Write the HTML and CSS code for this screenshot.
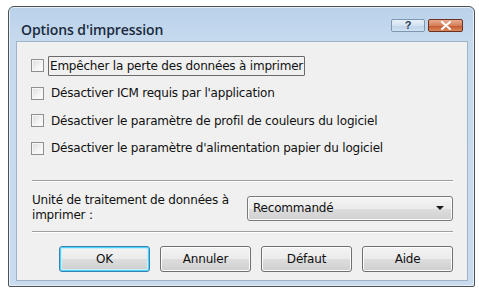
FILE: index.html
```html
<!DOCTYPE html>
<html lang="fr">
<head>
<meta charset="utf-8">
<title>Options d'impression</title>
<link rel="stylesheet" href="styles.css">
</head>
<body>
<div class="window">
  <div class="titlebar">
    <div class="title">Options d'impression</div>
    <div class="caption-buttons">
      <div class="cap-btn help">?</div>
      <div class="cap-btn close">
        <svg width="12" height="9" viewBox="0 0 12 9"><path d="M2 1 L10 8 M10 1 L2 8" stroke="#fff" stroke-width="2.2" stroke-linecap="round"/></svg>
      </div>
    </div>
  </div>
  <div class="client">
    <div class="checks">
      <label class="check-row"><span class="box"></span><span class="lbl focus">Empêcher la perte des données à imprimer</span></label>
      <label class="check-row"><span class="box"></span><span class="lbl">Désactiver ICM requis par l'application</span></label>
      <label class="check-row"><span class="box"></span><span class="lbl">Désactiver le paramètre de profil de couleurs du logiciel</span></label>
      <label class="check-row"><span class="box"></span><span class="lbl">Désactiver le paramètre d'alimentation papier du logiciel</span></label>
    </div>
    <div class="sep sep1"></div>
    <div class="unit-row">
      <div class="unit-label">Unité de traitement de données à<br>imprimer :</div>
      <div class="combo"><span>Recommandé</span><span class="arrow"></span></div>
    </div>
    <div class="sep sep2"></div>
    <div class="buttons">
      <div class="btn default">OK</div>
      <div class="btn">Annuler</div>
      <div class="btn">Défaut</div>
      <div class="btn">Aide</div>
    </div>
  </div>
</div>
</body>
</html>
```
FILE: styles.css
```css
html, body {
  margin: 0;
  padding: 0;
  background: #ffffff;
}
body {
  padding: 6px 4px 0 8px;
  font-family: "DejaVu Sans", Verdana, sans-serif;
  color: #111111;
}
.window {
  width: 465px;
  height: 279px;
  border: 1px solid #4d5257;
  border-radius: 6px 6px 2px 2px;
  background: linear-gradient(to bottom, #b9d1ea 0px, #c6daee 34px, #c9dcef 100%);
  display: flex;
  flex-direction: column;
  box-shadow: inset 0 0 0 1px #e3eef9;
}
.titlebar {
  height: 34px;
  display: flex;
  justify-content: space-between;
  align-items: flex-start;
  padding: 0 11px 0 12px;
}
.title {
  margin-top: 13px;
  font-family: "Open Sans", "Liberation Sans", sans-serif;
  font-weight: 600;
  font-size: 14px;
  color: #1a2a3c;
  letter-spacing: -0.1px;
}
.caption-buttons {
  margin-top: 12px;
  display: flex;
  gap: 3px;
}
.cap-btn {
  height: 11px;
  border: 1px solid #7d97b1;
  border-radius: 2px;
  display: flex;
  align-items: center;
  justify-content: center;
}
.help {
  width: 32px;
  background: linear-gradient(to bottom, #e8f1fa 0%, #d3e2f1 50%, #bfd4ea 51%, #cfe0f1 100%);
  font-family: "Liberation Sans", sans-serif;
  font-weight: bold;
  font-size: 11px;
  color: #2a3f56;
  line-height: 11px;
}
.close {
  width: 33px;
  border-color: #6b3020;
  background: linear-gradient(to bottom, #e9ab90 0%, #d5805a 50%, #c4542c 51%, #da8a5e 100%);
}
.client {
  margin: 0 6px 5px 7px;
  flex: 1;
  background: #f0f0f0;
  border: 1px solid #9fb3c8;
  font-size: 12px;
}
.checks {
  padding: 10px 0 0 14px;
  display: flex;
  flex-direction: column;
}
.check-row {
  height: 27.5px;
  display: flex;
  align-items: center;
}
.box {
  width: 11px;
  height: 11px;
  border: 1px solid #8f8f8f;
  background: linear-gradient(135deg, #dcdcdc 0%, #f4f4f4 60%, #ffffff 100%);
  box-shadow: inset 0 0 0 1px #f6f6f6;
  flex: none;
}
.lbl {
  margin-left: 5px;
  padding: 2px 1px;
  font-size: 12px;
  letter-spacing: -0.2px;
  border: 1px solid transparent;
}
.lbl.focus {
  border: 1px solid #6a6a6a;
  border-radius: 1px;
  margin-left: 4px;
}
.sep {
  height: 0;
  border-top: 1px solid #a0a0a0;
  border-bottom: 1px solid #ffffff;
  margin: 0 14px 0 15px;
}
.sep1 {
  margin-top: 18px;
}
.unit-row {
  display: flex;
  align-items: center;
  justify-content: space-between;
  padding: 11px 14px 8px 15px;
}
.unit-label {
  font-size: 12px;
  letter-spacing: -0.2px;
  line-height: 15px;
}
.combo {
  border: 1px solid #7a7a7a;
  border-radius: 3px;
  background: linear-gradient(to bottom, #f5f5f5 0%, #ebebeb 50%, #dddddd 51%, #d0d0d0 100%);
  box-shadow: inset 0 0 0 1px #fbfbfb;
  display: flex;
  align-items: center;
  justify-content: space-between;
  padding: 0 8px 0 5px;
  box-sizing: border-box;
  width: 206px;
  height: 25px;
  letter-spacing: -0.2px;
}
.arrow {
  width: 0;
  height: 0;
  border-left: 4px solid transparent;
  border-right: 4px solid transparent;
  border-top: 4px solid #1a1a1a;
}
.buttons {
  display: flex;
  gap: 10px;
  padding: 13px 0 0 42px;
}
.btn {
  width: 91px;
  height: 26px;
  box-sizing: border-box;
  border: 1px solid #707070;
  border-radius: 3px;
  background: linear-gradient(to bottom, #f3f3f3 0%, #ebebeb 50%, #dddddd 51%, #cfcfcf 100%);
  box-shadow: inset 0 0 0 1px #fcfcfc;
  display: flex;
  align-items: center;
  justify-content: center;
  font-size: 12px;
  letter-spacing: -0.2px;
}
.btn.default {
  border-color: #3c7fb1;
  box-shadow: inset 0 0 0 1px #48d7fb, inset 0 0 0 2px #c9eefb;
}
```
